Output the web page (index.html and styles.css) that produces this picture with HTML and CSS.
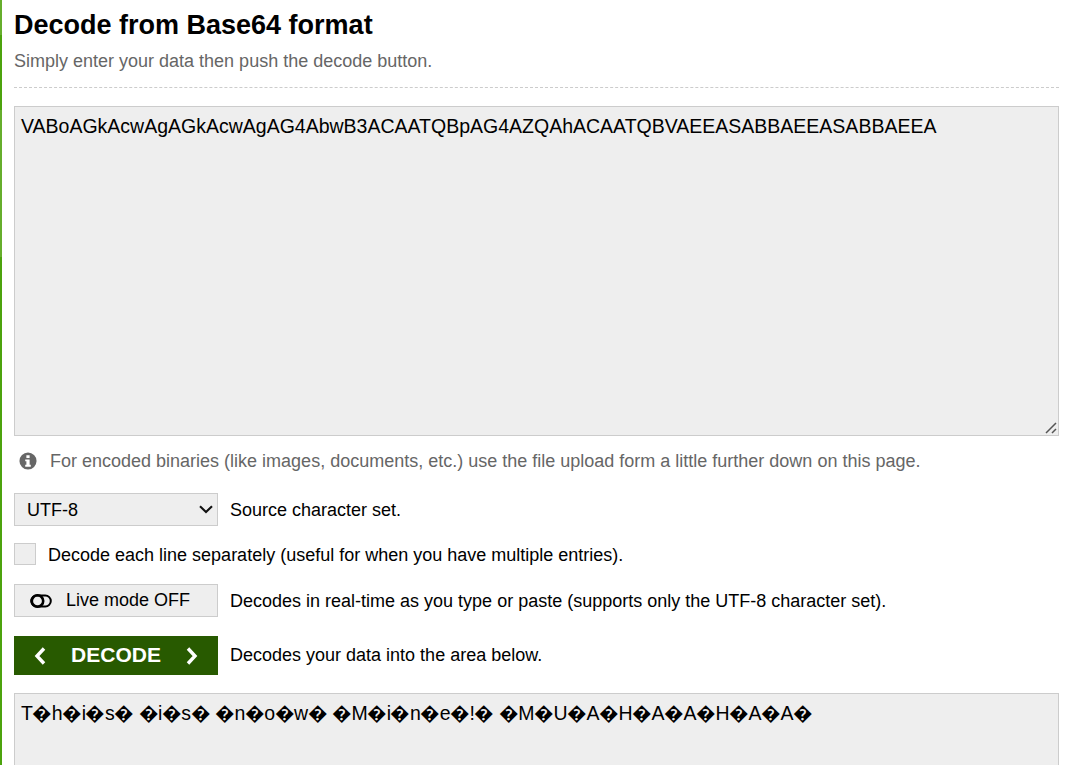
FILE: index.html
```html
<!DOCTYPE html>
<html lang="en">
<head>
<meta charset="utf-8">
<title>Decode from Base64 format</title>
<link rel="stylesheet" href="styles.css">
</head>
<body>
<main class="page">
  <header class="head">
    <h1 class="title">Decode from Base64 format</h1>
    <p class="subtitle">Simply enter your data then push the decode button.</p>
  </header>
  <div class="area-wrap area-wrap-input">
    <textarea class="area area-input" spellcheck="false">VABoAGkAcwAgAGkAcwAgAG4AbwB3ACAATQBpAG4AZQAhACAATQBVAEEASABBAEEASABBAEEA</textarea>
    <svg class="grip" viewBox="0 0 12 12" aria-hidden="true"><path d="M1 11 11 1M7 11l4-4" fill="none" stroke="#555" stroke-width="1.500"/></svg>
  </div>
  <p class="hint">
    <svg class="info-icon" viewBox="0 0 20 20" aria-hidden="true"><circle cx="10" cy="10" r="9.500" fill="#666"/><rect x="8.200" y="3.600" width="3.600" height="3.100" fill="#fff"/><path d="M6.900 8.300h4.900v6h1.300v2.100H6.900v-2.100h1.300v-3.900H6.900z" fill="#fff"/></svg>
    <span>For encoded binaries (like images, documents, etc.) use the file upload form a little further down on this page.</span>
  </p>
  <div class="row row-select">
    <div class="select-wrap">
      <select class="control select"><option>UTF-8</option></select>
      <svg class="select-arrow" viewBox="0 0 14 9" aria-hidden="true"><path d="M1 1.200 7 7l6-5.800" fill="none" stroke="#111" stroke-width="2.100"/></svg>
    </div>
    <span class="label label-low">Source character set.</span>
  </div>
  <label class="row row-check">
    <span class="checkbox"></span>
    <span class="label label-low">Decode each line separately (useful for when you have multiple entries).</span>
  </label>
  <div class="row row-live">
    <button class="control live" type="button">
      <svg class="toggle-icon" viewBox="0 0 22 14" aria-hidden="true"><rect x="1.200" y="1.500" width="19.600" height="11" rx="5.500" fill="none" stroke="#000" stroke-width="2"/><circle cx="7.500" cy="7" r="5.700" fill="none" stroke="#000" stroke-width="2.600"/></svg>
      <span>Live mode OFF</span>
    </button>
    <span class="label label-low">Decodes in real-time as you type or paste (supports only the UTF-8 character set).</span>
  </div>
  <div class="row row-decode">
    <button class="decode" type="button">
      <svg class="chev" viewBox="0 0 14 20" aria-hidden="true"><path d="M11 2.500 4 10l7 7.500" fill="none" stroke="#fff" stroke-width="3.400"/></svg>
      <span class="decode-text">DECODE</span>
      <svg class="chev" viewBox="0 0 14 20" aria-hidden="true"><path d="M3 2.500 10 10l-7 7.500" fill="none" stroke="#fff" stroke-width="3.400"/></svg>
    </button>
    <span class="label">Decodes your data into the area below.</span>
  </div>
  <textarea class="area area-output" spellcheck="false">T�h�i�s� �i�s� �n�o�w� �M�i�n�e�!� �M�U�A�H�A�A�H�A�A�</textarea>
</main>
</body>
</html>
```
FILE: styles.css
```css
html, body {
  margin: 0;
  height: 765px;
  overflow: hidden;
  background: #fff;
}
* { box-sizing: border-box; }
.page {
  padding: 0 7px 0 14px;
  height: 765px;
  overflow: hidden;
  background: linear-gradient(to bottom, #66ae2c 0 35px, #4ca30d 35px 110px, #66ae2c 110px 257px, #4ca30d 257px) 0 0 / 2px 100% no-repeat;
  font-family: "Liberation Sans", Arial, sans-serif;
  font-size: 18px;
  color: #000;
}
.head {
  height: 88px;
  border-bottom: 1px dashed #ccc;
  padding-top: 10px;
}
.title {
  margin: 0;
  font-size: 27px;
  line-height: 30px;
  font-weight: 700;
}
.subtitle {
  margin: 11px 0 0;
  font-size: 18px;
  line-height: 20px;
  color: #666;
}
.area-wrap { position: relative; }
.area-wrap-input { margin-top: 18px; height: 330px; }
.area {
  display: block;
  width: 100%;
  margin: 0;
  padding: 7px 6px;
  border: 1px solid #ccc;
  border-radius: 0;
  background: #eee;
  color: #000;
  font-family: "Liberation Sans", Arial, sans-serif;
  font-size: 19.5px;
  line-height: 24px;
  outline: none;
  resize: none;
}
.area-input { height: 330px; }
.area-output {
  margin-top: 18px;
  height: 300px;
  letter-spacing: -0.52px;
}
.grip {
  position: absolute;
  right: 2px;
  bottom: 2px;
  width: 12px;
  height: 12px;
}
.hint {
  display: flex;
  align-items: center;
  margin: 14px 0 0;
  padding-left: 5px;
  height: 22px;
  color: #666;
  font-size: 18px;
}
.info-icon { width: 18px; height: 18px; margin-right: 13px; flex: none; }
.row { display: flex; align-items: center; }
.label { font-size: 18px; color: #000; }
.label-low { padding-top: 2px; }
.control {
  width: 204px;
  height: 33px;
  margin: 0;
  border: 1px solid #ccc;
  border-radius: 0;
  background-color: #eee;
  color: #000;
  font-family: "Liberation Sans", Arial, sans-serif;
  font-size: 18px;
}
.control + .label, .decode + .label, .select-wrap + .label { margin-left: 12px; }
.row-select { margin-top: 21px; }
.select-wrap { position: relative; width: 204px; height: 33px; flex: none; }
.select { display: block; padding: 0 12px; appearance: none; }
.select-arrow {
  position: absolute;
  right: 5px;
  top: 12px;
  width: 14px;
  height: 9px;
  pointer-events: none;
}
.row-check { margin-top: 17px; height: 22px; }
.checkbox {
  width: 22px;
  height: 22px;
  margin-right: 12px;
  border: 1px solid #ccc;
  background: #eee;
  flex: none;
}
.row-live { margin-top: 19px; }
.live {
  display: flex;
  align-items: center;
  padding: 0 0 0 15px;
}
.toggle-icon { width: 22px; height: 14px; margin-right: 14px; flex: none; }
.row-decode { margin-top: 19px; }
.decode {
  display: flex;
  align-items: center;
  justify-content: space-between;
  width: 204px;
  height: 39px;
  margin: 0;
  padding: 0 19px;
  border: 0;
  border-radius: 0;
  background: #285a00;
  color: #fff;
  font-family: "Liberation Sans", Arial, sans-serif;
  font-size: 21px;
  font-weight: 700;
}
.decode-text { margin-top: -2px; }
.chev { width: 14px; height: 20px; flex: none; }
```
